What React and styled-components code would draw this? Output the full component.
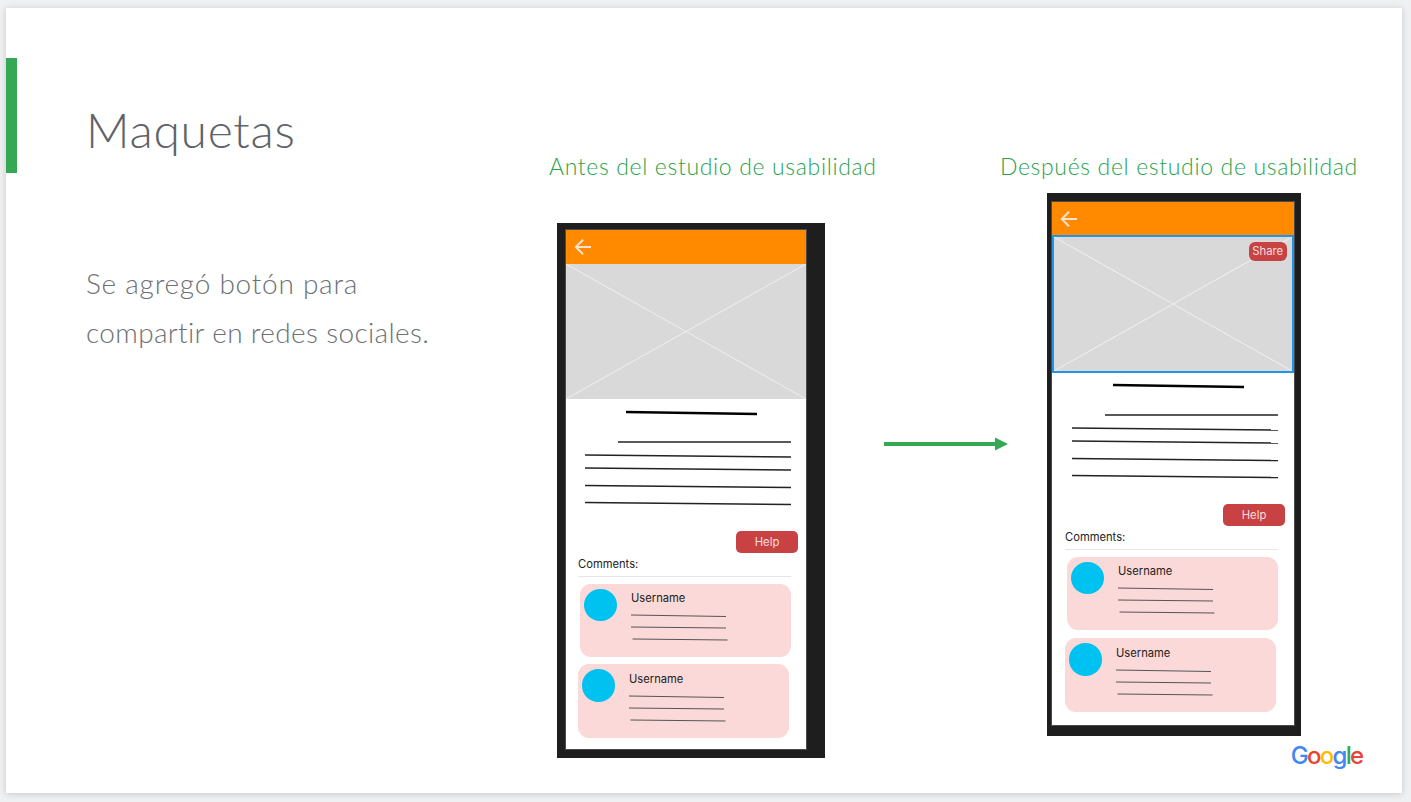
import React from 'react';
import styled, { createGlobalStyle } from 'styled-components';

const GlobalStyle = createGlobalStyle`
  html, body {
    margin: 0;
    padding: 0;
    height: 100%;
    background: #eef0f2;
    overflow: hidden;
  }
  #root {
    padding: 8px 0 0 6px;
  }
`;

const Slide = styled.main`
  width: 1396px;
  height: 785px;
  background: #fff;
  box-shadow: 0 1px 6px rgba(60, 64, 67, .22);
  display: flex;
  align-items: flex-start;
  position: relative;
`;

const AccentBar = styled.div`
  flex: none;
  width: 11px;
  height: 115px;
  margin-top: 50px;
  background: #34a853;
`;

const Intro = styled.section`
  flex: none;
  width: 463px;
  margin-left: 69px;
  padding-top: 92px;
  font-family: Lato, "Open Sans", sans-serif;
  font-weight: 300;
`;

const Title = styled.h1`
  margin: 0;
  font-size: 48px;
  line-height: 60px;
  font-weight: 300;
  color: #5f6368;
  letter-spacing: .72px;
`;

const Body = styled.p`
  margin: 99px 0 0;
  font-size: 28px;
  line-height: 49px;
  color: #6d7075;
`;

const BodyLine = styled.span`
  display: block;
  letter-spacing: ${p => p.$spacing}px;
`;

const Column = styled.section`
  flex: none;
  width: ${p => p.$width}px;
  padding-top: 146px;
`;

const Caption = styled.h2`
  margin: 0;
  font-family: Lato, "Open Sans", sans-serif;
  font-size: 23px;
  line-height: 25px;
  font-weight: 300;
  color: #2aa24a;
  letter-spacing: .65px;
  white-space: nowrap;
`;

const Arrow = styled.svg`
  flex: none;
  display: block;
  width: 124px;
  height: 14px;
  margin: 428.5px -8px 0 9px;
`;

const Phone = styled.div`
  box-sizing: border-box;
  width: ${p => p.$width}px;
  height: ${p => p.$height}px;
  margin: ${p => p.$top}px 0 0 ${p => p.$left}px;
  padding: ${p => p.$pad};
  background: #1e1e1e;
`;

const Screen = styled.div`
  height: 100%;
  background: #fff;
  box-shadow: 0 0 0 1px rgba(255, 255, 255, .2);
  display: flex;
  flex-direction: column;
`;

const AppBar = styled.header`
  flex: none;
  height: ${p => p.$height}px;
  background: #ff8a00;
  display: flex;
  align-items: center;
  padding-left: 8px;
`;

const BackIcon = styled.svg`
  display: block;
  width: 18px;
  height: 18px;
`;

const Picture = styled.div`
  flex: none;
  box-sizing: border-box;
  height: ${p => p.$height}px;
  background: #d9d9d9;
  position: relative;
  border: ${p => (p.$selected ? '2px solid #2196e8' : 'none')};
`;

const Cross = styled.svg`
  display: block;
  width: 100%;
  height: 100%;
`;

const ShareButton = styled.span`
  position: absolute;
  top: 4.5px;
  right: 5px;
  width: 38.5px;
  height: 19.5px;
  border-radius: 6px;
  background: #c84244;
  color: #f6dede;
  font: 400 11.3px/19.5px Inter, sans-serif;
  text-align: center;
`;

const Content = styled.div`
  padding-left: ${p => p.$inset}px;
  padding-top: ${p => p.$top}px;
`;

const Lines = styled.svg`
  display: block;
  width: ${p => p.$width}px;
  height: ${p => p.$height}px;
  margin-top: ${p => p.$top || 0}px;
`;

const HelpButton = styled.div`
  width: 62px;
  height: 22px;
  margin: ${p => p.$top}px 0 0 170px;
  border-radius: 5px;
  background: #c84244;
  color: #f6dede;
  font: 400 11.3px/22px Inter, sans-serif;
  text-align: center;
`;

const CommentsLabel = styled.div`
  margin: 4px 0 0 12px;
  font: 400 11.2px/14px Inter, sans-serif;
  color: #222;
`;

const Divider = styled.div`
  width: 213px;
  height: 1px;
  margin: 5px 0 0 12px;
  background: #e6e6e6;
`;

const Card = styled.article`
  box-sizing: border-box;
  width: 211px;
  height: ${p => p.$height}px;
  margin: ${p => p.$top}px 0 0 ${p => p.$indent}px;
  padding: 5px 4px;
  border-radius: 11px;
  background: #fbd9d8;
  display: flex;
`;

const Avatar = styled.div`
  flex: none;
  width: 32.5px;
  height: 32.5px;
  border-radius: 50%;
  background: #00c2f0;
`;

const CardBody = styled.div`
  margin-left: 14.5px;
`;

const Username = styled.div`
  padding-top: 2.5px;
  font: 400 11.2px/14px Inter, sans-serif;
  color: #222;
`;

const Wordmark = styled.div`
  position: absolute;
  right: 39.5px;
  bottom: 21.8px;
  font: 500 24px/30px Inter, sans-serif;
  letter-spacing: -1.7px;
`;

const Letter = styled.span`
  color: ${p => p.$color};
`;

const textLines = [
  { x1: 60, y1: 3, x2: 191, y2: 5, w: 2.5, c: '#000' },
  { x1: 52, y1: 33, x2: 225, y2: 33, w: 1.5, c: '#222' },
  { x1: 19, y1: 46, x2: 225, y2: 48, w: 1.5, c: '#222' },
  { x1: 19, y1: 59, x2: 225, y2: 61, w: 1.5, c: '#222' },
  { x1: 19, y1: 76.5, x2: 225, y2: 78.5, w: 1.5, c: '#222' },
  { x1: 19, y1: 93.5, x2: 225, y2: 95.5, w: 1.5, c: '#222' },
];

const cardLines = [
  { x1: 0, y1: 3, x2: 95, y2: 4.5, w: 1, c: '#555' },
  { x1: 0, y1: 15, x2: 95, y2: 16, w: 1, c: '#555' },
  { x1: 1.5, y1: 27, x2: 96.5, y2: 28, w: 1, c: '#555' },
];

const SketchLines = ({ items, width, height, top }) => (
  <Lines $width={width} $height={height} $top={top} viewBox={`0 0 ${width} ${height}`}>
    {items.map((l, i) => (
      <line key={i} x1={l.x1} y1={l.y1} x2={l.x2} y2={l.y2} stroke={l.c} strokeWidth={l.w} />
    ))}
  </Lines>
);

const Mockup = ({ phone, barHeight, pictureHeight, selected, share, inset, contentTop, helpTop, cardGap }) => (
  <Phone {...phone}>
    <Screen>
      <AppBar $height={barHeight}>
        <BackIcon viewBox="0 0 18 18" fill="none" stroke="#f7e3cb" strokeWidth="2">
          <path d="M17 9H2M9 1.8L1.8 9L9 16.2" />
        </BackIcon>
      </AppBar>
      <Picture $height={pictureHeight} $selected={selected}>
        <Cross viewBox="0 0 240 135" preserveAspectRatio="none" stroke="#efefef" strokeWidth="1">
          <line x1="0" y1="0" x2="240" y2="135" vectorEffect="non-scaling-stroke" />
          <line x1="240" y1="0" x2="0" y2="135" vectorEffect="non-scaling-stroke" />
        </Cross>
        {share && <ShareButton>Share</ShareButton>}
      </Picture>
      <Content $inset={inset} $top={contentTop}>
        <SketchLines items={textLines} width={240} height={100} />
        <HelpButton $top={helpTop}>Help</HelpButton>
        <CommentsLabel>Comments:</CommentsLabel>
        <Divider />
        <Card $indent={14} $height={73.5} $top={6.5}>
          <Avatar />
          <CardBody>
            <Username>Username</Username>
            <SketchLines items={cardLines} width={100} height={30} top={7} />
          </CardBody>
        </Card>
        <Card $indent={12} $height={74} $top={cardGap}>
          <Avatar />
          <CardBody>
            <Username>Username</Username>
            <SketchLines items={cardLines} width={100} height={30} top={7} />
          </CardBody>
        </Card>
      </Content>
    </Screen>
  </Phone>
);

const App = () => (
  <>
    <GlobalStyle />
    <Slide>
      <AccentBar />
      <Intro>
        <Title>Maquetas</Title>
        <Body>
          <BodyLine $spacing={0.75}>Se agregó botón para</BodyLine>
          <BodyLine $spacing={0.35}>compartir en redes sociales.</BodyLine>
        </Body>
      </Intro>
      <Column $width={326}>
        <Caption>Antes del estudio de usabilidad</Caption>
        <Mockup
          phone={{ $width: 268, $height: 535, $top: 44, $left: 8, $pad: '7px 19px 9px 9px' }}
          barHeight={34}
          pictureHeight={135}
          inset={0}
          contentTop={10}
          helpTop={22}
          cardGap={7}
        />
      </Column>
      <Arrow viewBox="0 0 124 14">
        <rect x="0" y="5" width="112" height="4" fill="#34a853" />
        <polygon points="111,0.5 124,7 111,13.5" fill="#34a853" />
      </Arrow>
      <Column $width={360}>
        <Caption>Después del estudio de usabilidad</Caption>
        <Mockup
          phone={{ $width: 254, $height: 543, $top: 14, $left: 47, $pad: '9px 7px 11.5px 5px' }}
          barHeight={33}
          pictureHeight={138}
          selected
          share
          inset={1}
          contentTop={9}
          helpTop={22}
          cardGap={8}
        />
      </Column>
      <Wordmark>
        <Letter $color="#4285f4">G</Letter>
        <Letter $color="#ea4335">o</Letter>
        <Letter $color="#fbbc05">o</Letter>
        <Letter $color="#4285f4">g</Letter>
        <Letter $color="#34a853">l</Letter>
        <Letter $color="#ea4335">e</Letter>
      </Wordmark>
    </Slide>
  </>
);

export default App;
